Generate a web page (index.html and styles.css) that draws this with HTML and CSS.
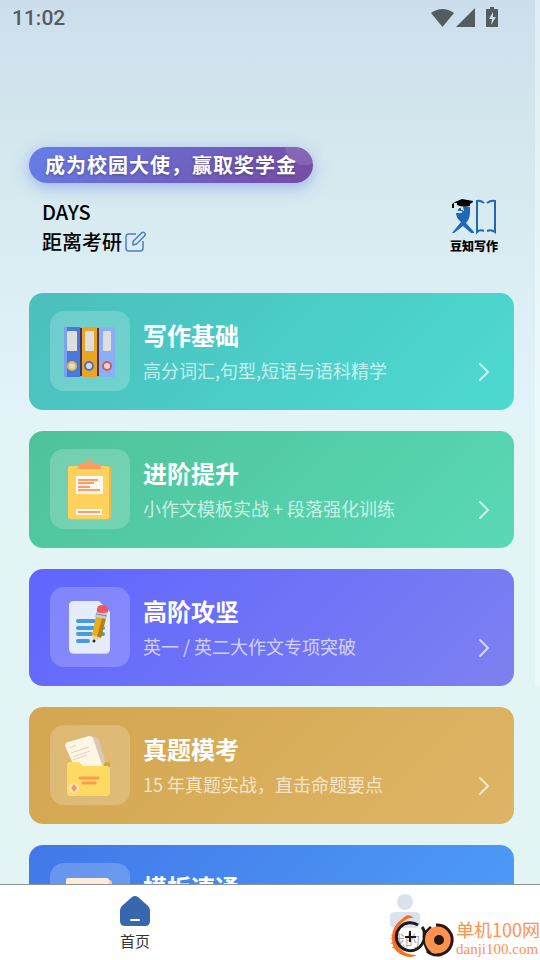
FILE: index.html
```html
<!DOCTYPE html>
<html lang="zh-CN">
  <head>
    <meta charset="UTF-8" />
    <meta name="viewport" content="width=device-width, initial-scale=1.0" />
    <title>豆知写作</title>
    <link rel="stylesheet" href="styles.css">
  </head>

  <body>
    <main class="page">
      <!-- Status bar -->
      <div class="status-bar">
        <span>11:02</span>
        <svg class="status-icons" viewBox="0 0 68 20" width="68" height="20">
          <path d="M0 5Q11.500-3 23 5L11.500 19Z" />
          <path d="M25 19L44 0V19Z" />
          <path fill-rule="evenodd" d="M59 -1h4v2h4v18H55V1h4zM62 4l-4 7h3l-1 6 5-8h-3z" />
        </svg>
      </div>

      <header class="hero">
        <a class="promo" href="#">成为校园大使，赢取奖学金</a>
        <div class="hero-row">
          <div class="countdown">
            <div>DAYS</div>
            <div class="countdown-line">
              <span>距离考研</span>
              <button class="edit" aria-label="编辑">
                <svg viewBox="0 0 22 22" width="22" height="22">
                  <path d="M11 3H4Q1 3 1 6V17Q1 20 4 20H15Q18 20 18 17V10" />
                  <path d="M8 14L8 10.500L16.500 2Q18 .5 19.500 2T19.500 5L11.500 13Z" />
                </svg>
              </button>
            </div>
          </div>
          <div class="brand">
            <svg viewBox="0 0 48 36" width="48" height="36">
              <path fill="#2067b5" d="M13 8H20V13Q20 20 16 24L24 33V34H21L13 27L4 34H2L11 23Q6 19 6 14H12V12H14Z" />
              <path fill="#2067b5" d="M9 9h2v2h2v1H8v-2h1z" />
              <path fill="#000" d="M5 3L12 0L23 2V3L20 5V7Q13 9 7 6V4L4 4V9H2V5Z" />
              <path fill="none" stroke="#2067b5" stroke-width="2" d="M34 4Q30 1 27 2V33Q30 30 34 32M37 4Q41 1 45 2V33Q41 30 37 32" />
            </svg>
            <span>豆知写作</span>
          </div>
        </div>
      </header>

      <nav class="courses">
        <a class="card card-teal" href="#">
          <span class="card-icon">
            <svg viewBox="0 0 80 80" width="80" height="80">
              <rect x="14" y="16" width="17" height="50" rx="2" fill="#4c78d8" />
              <rect x="14" y="16" width="3" height="50" rx="1" fill="#7ba2ef" />
              <rect x="30" y="17" width="2" height="48" fill="#353568" />
              <rect x="32" y="16" width="16" height="50" rx="2" fill="#eba423" />
              <rect x="47" y="17" width="2" height="48" fill="#573448" />
              <rect x="49" y="16" width="16" height="50" rx="2" fill="#89aff7" />
              <g fill="#dddedd">
                <rect x="17" y="20" width="10" height="20" rx="1" />
                <rect x="35" y="20" width="9" height="20" rx="1" />
                <rect x="53" y="20" width="8" height="20" rx="1" />
              </g>
              <g fill="#d8dcdf" stroke-width="2">
                <circle cx="22" cy="55" r="4" stroke="#e8bd35" />
                <circle cx="39" cy="55" r="4" stroke="#4d70bc" />
                <circle cx="57" cy="55" r="4" stroke="#dc5654" />
              </g>
            </svg>
          </span>
          <span class="card-text">
            <strong>写作基础</strong>
            <span>高分词汇,句型,短语与语科精学</span>
          </span>
          <svg class="arrow" viewBox="0 0 12 20" width="12" height="20"><path d="M2 2L10 10L2 18" /></svg>
        </a>

        <a class="card card-green" href="#">
          <span class="card-icon">
            <svg viewBox="0 0 80 80" width="80" height="80">
              <rect x="18" y="17" width="43" height="54" rx="3" fill="#edb74c" />
              <rect x="18" y="17" width="41" height="53" rx="3" fill="#ffd25e" />
              <path fill="#ff9b5c" d="M28 20V17Q29 14 32 14H47Q50 14 51 17V20Z" />
              <circle cx="39" cy="14" r="3" fill="none" stroke="#ff9b5c" stroke-width="2" />
              <path fill="#fff8f0" d="M26 27h27v18H26zM26 60h26v6H26z" />
              <path stroke="#ff9c67" stroke-width="2" d="M28 31h20M28 34h16M28 38h12M28 41h22M28 63h22" />
            </svg>
          </span>
          <span class="card-text">
            <strong>进阶提升</strong>
            <span>小作文模板实战 + 段落强化训练</span>
          </span>
          <svg class="arrow" viewBox="0 0 12 20" width="12" height="20"><path d="M2 2L10 10L2 18" /></svg>
        </a>

        <a class="card card-purple" href="#">
          <span class="card-icon">
            <svg viewBox="0 0 80 80" width="80" height="80">
              <path fill="#c5cde7" d="M24 15H49L60 26V62Q60 67 55 67H24Q19 67 19 62V20Q19 15 24 15Z" />
              <path fill="#e5ecfa" d="M24 14H49L60 25V61Q60 66 55 66H24Q19 66 19 61V19Q19 14 24 14Z" />
              <path stroke="#459ae1" stroke-width="4" stroke-linecap="round" d="M28 34h16M28 41h15M50 47h3M28 47h13M28 54h10M52 41h1" />
              <path fill="#e8ae19" d="M46 29L56 31L51 51L42 48Z" />
              <path fill="#bd7d13" d="M52 31L56 31L51 51L47 50Z" />
              <path fill="#ead2ac" d="M42 48L51 51L43 55Z" />
              <circle cx="44" cy="54" r="1.500" fill="#302f37" />
              <path fill="#c3c8db" d="M47 23L58 25L56 32L45 30Z" />
              <path stroke="#8589a2" stroke-width="1" d="M46 27L57 29" />
              <path fill="#ee565a" d="M47 25Q46 18 52 18Q59 18 58 25Q52 27 47 25Z" />
            </svg>
          </span>
          <span class="card-text">
            <strong>高阶攻坚</strong>
            <span>英一 / 英二大作文专项突破</span>
          </span>
          <svg class="arrow" viewBox="0 0 12 20" width="12" height="20"><path d="M2 2L10 10L2 18" /></svg>
        </a>

        <a class="card card-gold" href="#">
          <span class="card-icon">
            <svg viewBox="0 0 80 80" width="80" height="80">
              <path fill="#d9cbb2" d="M38 11L46 12Q49 14 50 18L57 43H35Z" />
              <path fill="#fff6e5" d="M18 17L39 11Q43 11 44 16L53 43H25L15 21Q15 18 18 17Z" />
              <path fill="none" stroke="#ded3bd" stroke-width="1" d="M20 23L26 20M21 28L39 22M23 32L40 26M23 35L37 30" />
              <rect x="54" y="37" width="6" height="8" rx="2" fill="#d4a92e" />
              <path fill="#ffda62" d="M17 40Q17 37 20 37H29L33 41H57Q60 41 60 44V67Q60 71 56 71H21Q17 71 17 67Z" />
              <path stroke="#ff9951" stroke-width="3" stroke-linecap="round" d="M30 53h18M33 58h12" />
              <circle cx="24" cy="63" r="5" fill="#ffe5bd" />
              <path fill="#ff9255" d="M24 59l3 4-3 4-3-4z" />
            </svg>
          </span>
          <span class="card-text">
            <strong>真题模考</strong>
            <span>15 年真题实战，直击命题要点</span>
          </span>
          <svg class="arrow" viewBox="0 0 12 20" width="12" height="20"><path d="M2 2L10 10L2 18" /></svg>
        </a>

        <a class="card card-blue" href="#">
          <span class="card-icon">
            <svg viewBox="0 0 80 80" width="80" height="80">
              <rect x="18" y="17" width="44" height="48" rx="3" fill="#ffce90" />
              <rect x="16" y="15" width="43" height="50" rx="2" fill="#ffead5" />
            </svg>
          </span>
          <span class="card-text">
            <strong>模板速通</strong>
          </span>
        </a>
      </nav>
    </main>

    <div class="scroll-thumb"></div>

    <!-- Bottom tabs -->
    <footer class="tabs">
      <a class="tab" href="#">
        <svg viewBox="0 0 30 30" width="30" height="30">
          <path fill="#3967ad" d="M12 1Q15 -1 18 1L27 9Q30 11 30 14V25Q30 30 25 30H5Q0 30 0 25V14Q0 11 3 9Z" />
          <path stroke="#fff" stroke-width="2" stroke-linecap="round" d="M11 24H19" />
        </svg>
        <span>首页</span>
      </a>
      <a class="tab tab-off" href="#">
        <svg viewBox="0 0 30 34" width="30" height="34">
          <circle cx="15" cy="8" r="8" fill="#dce2eb" />
          <path fill="#dce2eb" d="M5 18H25Q30 18 30 23V29Q30 34 25 34H5Q0 34 0 29V23Q0 18 5 18Z" />
          <path fill="none" stroke="#fff" stroke-width="2" stroke-linecap="round" d="M13 25Q15 20 17 25" />
        </svg>
        <span>我的</span>
      </a>
    </footer>

    <!-- Site mark -->
    <div class="site-mark">
      <svg viewBox="0 0 65 48" width="65" height="48">
        <path fill="#ff6b16" d="M23 5Q17 -1 11 6Q2 12 1 23Q0 37 11 42Q20 46 26 42Q12 42 7 33Q0 17 13 8Q18 4 23 5Z" />
        <g fill="none" stroke="#231815" stroke-width="3">
          <path d="M27 12A14 14 0 1 0 26 36Q32 33 35 21" />
          <path d="M31 14Q34 17 33 24Q34 35 39 40M40 14L34 20" />
          <path stroke-width="2" d="M19 18V29M14 24H25" />
        </g>
        <circle cx="48" cy="27" r="14" fill="#ff914d" />
        <path fill="none" stroke="#231815" stroke-width="3" d="M45 12A15 15 0 1 1 36 38" />
        <circle cx="48" cy="27" r="5" fill="#231815" />
      </svg>
      <div class="site-mark-text">
        <span>单机100网</span>
        <small>danji100.com</small>
      </div>
    </div>
  </body>
</html>
```

FILE: styles.css
```css
* {
  box-sizing: border-box;
}

body {
  display: flex;
  flex-direction: column;
  position: relative;
  height: 100vh;
  margin: 0;
  overflow: hidden;
  font-family: "Noto Sans CJK SC", sans-serif;
  background: #e2f5f4;
}

a {
  color: inherit;
  text-decoration: none;
}

svg {
  display: block;
  flex-shrink: 0;
}

.page {
  flex: 1;
  min-height: 0;
  overflow-y: auto;
  scrollbar-width: none;
  background: linear-gradient(#ccdeec 0, #d2e6ee 110px, #d7eaf0 200px, #e2f4f9 410px, #e2f5f4 450px);
}

/* Status bar */
.status-bar {
  display: flex;
  justify-content: space-between;
  align-items: center;
  height: 36px;
  padding: 0 41px 0 12px;
  font: 500 21px/36px Roboto, sans-serif;
  color: #535c60;
}

.status-icons {
  fill: #535c60;
  overflow: visible;
}

/* Hero */
.hero {
  padding: 111px 42px 0 29px;
}

.promo {
  display: inline-block;
  position: relative;
  overflow: hidden;
  padding: 0 16px;
  border-radius: 18px;
  font-size: 20px;
  font-weight: 700;
  line-height: 36px;
  letter-spacing: 1px;
  color: #fff;
  text-shadow: 0 1px 3px rgba(0, 0, 0, 0.3);
  background: linear-gradient(135deg, #667eea, #764ba2);
  box-shadow: 0 4px 15px rgba(102, 126, 234, 0.5);
  vertical-align: top;
}

.promo::after {
  content: "";
  position: absolute;
  top: -22px;
  right: -12px;
  width: 40px;
  height: 40px;
  border-radius: 50%;
  background: rgba(255, 255, 255, 0.12);
}

.hero-row {
  display: flex;
  justify-content: space-between;
  margin-top: 14px;
  padding-left: 13px;
}

.countdown {
  font-size: 20px;
  font-weight: 500;
  line-height: 30px;
  color: #000;
}

.countdown-line {
  display: flex;
  align-items: center;
  gap: 3px;
}

.edit {
  padding: 0;
  border: 0;
  background: none;
}

.edit svg {
  fill: none;
  stroke: #4e7dc3;
  stroke-width: 1.5;
  stroke-linejoin: round;
}

.brand {
  display: flex;
  flex-direction: column;
  align-items: center;
  gap: 4px;
  padding-top: 2px;
  font-size: 12px;
  font-weight: 900;
  line-height: 14px;
  color: #000;
}

/* Course cards */
.courses {
  display: flex;
  flex-direction: column;
  gap: 21px;
  padding: 36px 26px 21px 29px;
}

.card {
  display: flex;
  align-items: center;
  gap: 13px;
  height: 117px;
  flex-shrink: 0;
  padding: 0 24px 0 21px;
  border-radius: 14px;
  color: #fff;
}

.card-teal {
  background: linear-gradient(135deg, #4bbfbd, #4cdad1);
}

.card-green {
  background: linear-gradient(135deg, #4fc29a, #58d9b5);
}

.card-purple {
  background: linear-gradient(135deg, #6065ff, #7d81ef);
}

.card-gold {
  background: linear-gradient(135deg, #d3a64f, #deb566);
}

.card-blue {
  background: linear-gradient(135deg, #4278e9, #4f9ff8);
}

.card-icon {
  flex-shrink: 0;
  margin-bottom: 2px;
  border-radius: 14px;
  background: rgba(255, 255, 255, 0.2);
}

.card-text {
  display: flex;
  flex-direction: column;
  flex: 1;
  height: 71px;
}

.card-text strong {
  font-size: 24px;
  line-height: 38px;
}

.card-text span {
  font-size: 18px;
  line-height: 33px;
  color: rgba(255, 255, 255, 0.7);
}

.arrow {
  align-self: flex-end;
  margin-bottom: 28px;
  fill: none;
  stroke: rgba(255, 255, 255, 0.7);
  stroke-width: 2;
  stroke-linecap: round;
}

.scroll-thumb {
  position: absolute;
  top: 0;
  right: 0;
  width: 5px;
  height: 686px;
  background: rgba(255, 255, 255, 0.4);
}

/* Bottom tabs */
.tabs {
  display: flex;
  height: 76px;
  border-top: 1px solid #8a9797;
  background: #fff;
}

.tab {
  display: flex;
  flex: 1;
  flex-direction: column;
  align-items: center;
  padding-top: 11px;
  font-size: 15px;
  line-height: 30px;
  color: #333;
}

.tab-off {
  padding-top: 9px;
  line-height: 24px;
  color: #aaa;
}

.site-mark {
  display: flex;
  position: absolute;
  right: 0;
  bottom: -1px;
  color: #ff914d;
}

.site-mark-text {
  display: flex;
  flex-direction: column;
  padding-top: 6px;
  white-space: nowrap;
}

.site-mark-text span {
  font-size: 18px;
  line-height: 20px;
}

.site-mark-text small {
  font: 15px/20px "Liberation Serif", serif;
}
```
